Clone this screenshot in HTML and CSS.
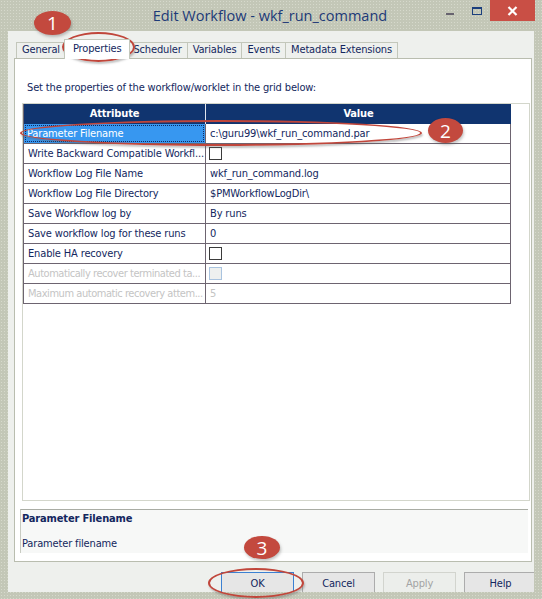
FILE: index.html
```html
<!DOCTYPE html>
<html>
<head>
<meta charset="utf-8">
<link rel="stylesheet" href="styles.css">
</head>
<body>
<div class="window">
  <div class="titlebar">
    <div class="title">Edit Workflow - wkf_run_command</div>
    <div class="controls">
      <span class="ctl-min"></span>
      <span class="ctl-max"></span>
      <span class="ctl-close">
        <svg width="11" height="10" viewBox="0 0 11 10"><path d="M1.5 1 L9.5 9 M9.5 1 L1.5 9" stroke="#fff" stroke-width="2.2" fill="none"/></svg>
      </span>
    </div>
  </div>
  <div class="client">
    <div class="tabs">
      <div class="tab">General</div>
      <div class="tab tab-active">Properties</div>
      <div class="tab">Scheduler</div>
      <div class="tab">Variables</div>
      <div class="tab">Events</div>
      <div class="tab">Metadata Extensions</div>
    </div>
    <div class="panel">
      <p class="intro">Set the properties of the workflow/worklet in the grid below:</p>
      <div class="gridbox">
        <div class="grid">
          <div class="hcell hcell-first">Attribute</div>
          <div class="hcell">Value</div>

          <div class="cell cell-selected"><span class="focus">Parameter Filename</span></div>
          <div class="cell">c:\guru99\wkf_run_command.par</div>

          <div class="cell">Write Backward Compatible Workfl...</div>
          <div class="cell"><span class="check"></span></div>

          <div class="cell">Workflow Log File Name</div>
          <div class="cell">wkf_run_command.log</div>

          <div class="cell">Workflow Log File Directory</div>
          <div class="cell">$PMWorkflowLogDir\</div>

          <div class="cell">Save Workflow log by</div>
          <div class="cell">By runs</div>

          <div class="cell">Save workflow log for these runs</div>
          <div class="cell">0</div>

          <div class="cell">Enable HA recovery</div>
          <div class="cell"><span class="check"></span></div>

          <div class="cell cell-disabled cell-tight">Automatically recover terminated ta...</div>
          <div class="cell"><span class="check check-disabled"></span></div>

          <div class="cell cell-disabled cell-tight">Maximum automatic recovery attem...</div>
          <div class="cell cell-disabled">5</div>
        </div>
      </div>
      <div class="desc">
        <div class="desc-title">Parameter Filename</div>
        <div class="desc-text">Parameter filename</div>
      </div>
    </div>
    <div class="buttons">
      <div class="btn btn-default">OK</div>
      <div class="btn">Cancel</div>
      <div class="btn btn-disabled">Apply</div>
      <div class="btn">Help</div>
    </div>
  </div>

  <div class="ring ring-tab"></div>
  <div class="ring ring-row"></div>
  <div class="ring ring-ok"></div>
  <div class="badge badge-1">1</div>
  <div class="badge badge-2">2</div>
  <div class="badge badge-3">3</div>
</div>
</body>
</html>
```

FILE: styles.css
```css
* { box-sizing: border-box; }

html, body {
  margin: 0;
  padding: 0;
  background: #c3c7b7;
}

.window {
  position: relative;
  width: 542px;
  height: 599px;
  overflow: hidden;
  background-color: #c3c7b7;
  background-image: radial-gradient(circle, #d6d9cc 0.7px, transparent 0.9px);
  background-size: 3px 3px;
  display: flex;
  flex-direction: column;
  font-family: "DejaVu Sans Condensed", "DejaVu Sans", sans-serif;
  font-stretch: semi-condensed;
  font-size: 11px;
  letter-spacing: -0.15px;
  color: #13275e;
}

/* ---------- title bar ---------- */
.titlebar {
  position: relative;
  height: 31px;
  flex: none;
  display: flex;
  align-items: center;
  justify-content: center;
}

.title {
  font-family: "Open Sans", "Noto Sans", sans-serif;
  font-stretch: normal;
  font-size: 14.5px;
  letter-spacing: 0;
  color: #1d3a78;
  margin-left: -2px;
  margin-top: -1px;
}

.controls {
  position: absolute;
  top: 0;
  right: 7px;
  display: flex;
  align-items: flex-start;
}

.ctl-min {
  width: 8px;
  height: 2px;
  background: #67636f;
  margin-top: 13px;
  margin-right: 18px;
}

.ctl-max {
  width: 10px;
  height: 8px;
  border: 1px solid #1b3f7d;
  border-top-width: 2px;
  margin-top: 7px;
  margin-right: 8px;
}

.ctl-close {
  width: 45px;
  height: 21px;
  background: #c94f45;
  display: flex;
  align-items: center;
  justify-content: center;
}

/* ---------- client area ---------- */
.client {
  flex: none;
  height: 561px;
  margin: 0 8px;
  padding: 0 2px 0 6px;
  background: #eef0ed;
  overflow: hidden;
}

.tabs {
  display: flex;
  align-items: flex-end;
  height: 16px;
  margin-top: 11px;
  padding-left: 2px;
}

.tab {
  height: 16px;
  padding: 0 5px;
  line-height: 14px;
  border: 1px solid #c3c7bb;
  border-bottom: none;
  border-left: none;
  background: #eef0ed;
  white-space: nowrap;
}

.tab:first-child {
  border-left: 1px solid #c3c7bb;
}

.tab-active {
  position: relative;
  z-index: 1;
  height: 20px;
  margin: 0 -2px -1px -2px;
  padding: 0 8px;
  line-height: 17px;
  background: #fff;
  border-left: 1px solid #c3c7bb;
}

.panel {
  border: 1px solid #b9bdaf;
  background: #fff;
  padding: 22px 0 8px 5px;
}

.intro {
  margin: 0 0 9px 7px;
  line-height: 13px;
}

.gridbox {
  height: 398px;
  margin-left: 2px;
  margin-right: 1px;
  border: 1px solid #d3d6cb;
}

.grid {
  display: grid;
  grid-template-columns: 182px 305px;
  border-left: 1px solid #6d6470;
}

.hcell {
  height: 20px;
  line-height: 19px;
  background: #10346f;
  color: #fff;
  font-weight: bold;
  text-align: center;
}

.hcell-first {
  border-right: 1px solid #dfe4ee;
}

.cell {
  height: 20px;
  line-height: 19px;
  padding-left: 4px;
  border-right: 1px solid #6d6470;
  border-bottom: 1px solid #6d6470;
  white-space: nowrap;
  overflow: hidden;
  display: flex;
  align-items: center;
}

.cell-selected {
  background: #3797f0;
  color: #fff;
  padding: 1px;
}

.focus {
  flex: 1;
  align-self: stretch;
  display: flex;
  align-items: center;
  padding-left: 2px;
  outline: 1px dotted #0f2a60;
  outline-offset: -1px;
}

.cell-disabled {
  color: #c4c4c4;
}

.cell-tight {
  letter-spacing: -0.45px;
}

.check {
  display: block;
  width: 13px;
  height: 13px;
  border: 1px solid #3b3b3b;
  background: #fff;
  margin-left: -1px;
}

.check-disabled {
  border-color: #a9c3df;
  background: #eef0ef;
}

.desc {
  margin-top: 8px;
  height: 44px;
  width: 508px;
  border-top: 1px solid #a9aca4;
  border-left: 1px solid #c8cbc2;
  background-color: #f1f2f0;
  background-image: radial-gradient(circle, #ffffff 0.6px, transparent 0.8px);
  background-size: 2px 2px;
  padding: 2px 0 0 1px;
}

.desc-title {
  font-weight: bold;
  line-height: 14px;
}

.desc-text {
  margin-top: 11px;
  line-height: 14px;
}

/* ---------- buttons ---------- */
.buttons {
  display: flex;
  gap: 8px;
  margin-top: 10px;
  padding-left: 207px;
}

.btn {
  flex: none;
  width: 73px;
  height: 23px;
  border: 1px solid #acacac;
  background: #e6e6e6;
  display: flex;
  align-items: center;
  justify-content: center;
  padding-bottom: 1px;
}

.btn-default {
  border-color: #3c80d2;
}

.btn-disabled {
  color: #a3a3a3;
  border-color: #d2d4ce;
  background: #eceeeb;
}

/* ---------- annotations ---------- */
.ring {
  position: absolute;
  border: 2px solid #c0463b;
  border-radius: 50%;
  box-shadow: 1px 2px 2px rgba(90, 90, 90, 0.35);
}

.ring-tab { left: 62px; top: 32px; width: 73px; height: 30px; }
.ring-row { left: 20px; top: 120px; width: 402px; height: 26px; }
.ring-ok  { left: 208px; top: 568px; width: 96px; height: 30px; }

.badge {
  position: absolute;
  border-radius: 50%;
  background: #c3493e;
  color: #fff;
  font-family: "Open Sans", "Noto Sans", sans-serif;
  font-stretch: normal;
  font-size: 19px;
  letter-spacing: 0;
  display: flex;
  align-items: center;
  justify-content: center;
  box-shadow: 1px 2px 3px rgba(80, 80, 80, 0.35);
}

.badge-1 { left: 34px; top: 11px; width: 37px; height: 24px; }
.badge-2 { left: 428px; top: 118px; width: 35px; height: 25px; }
.badge-3 { left: 244px; top: 536px; width: 36px; height: 23px; }
```
